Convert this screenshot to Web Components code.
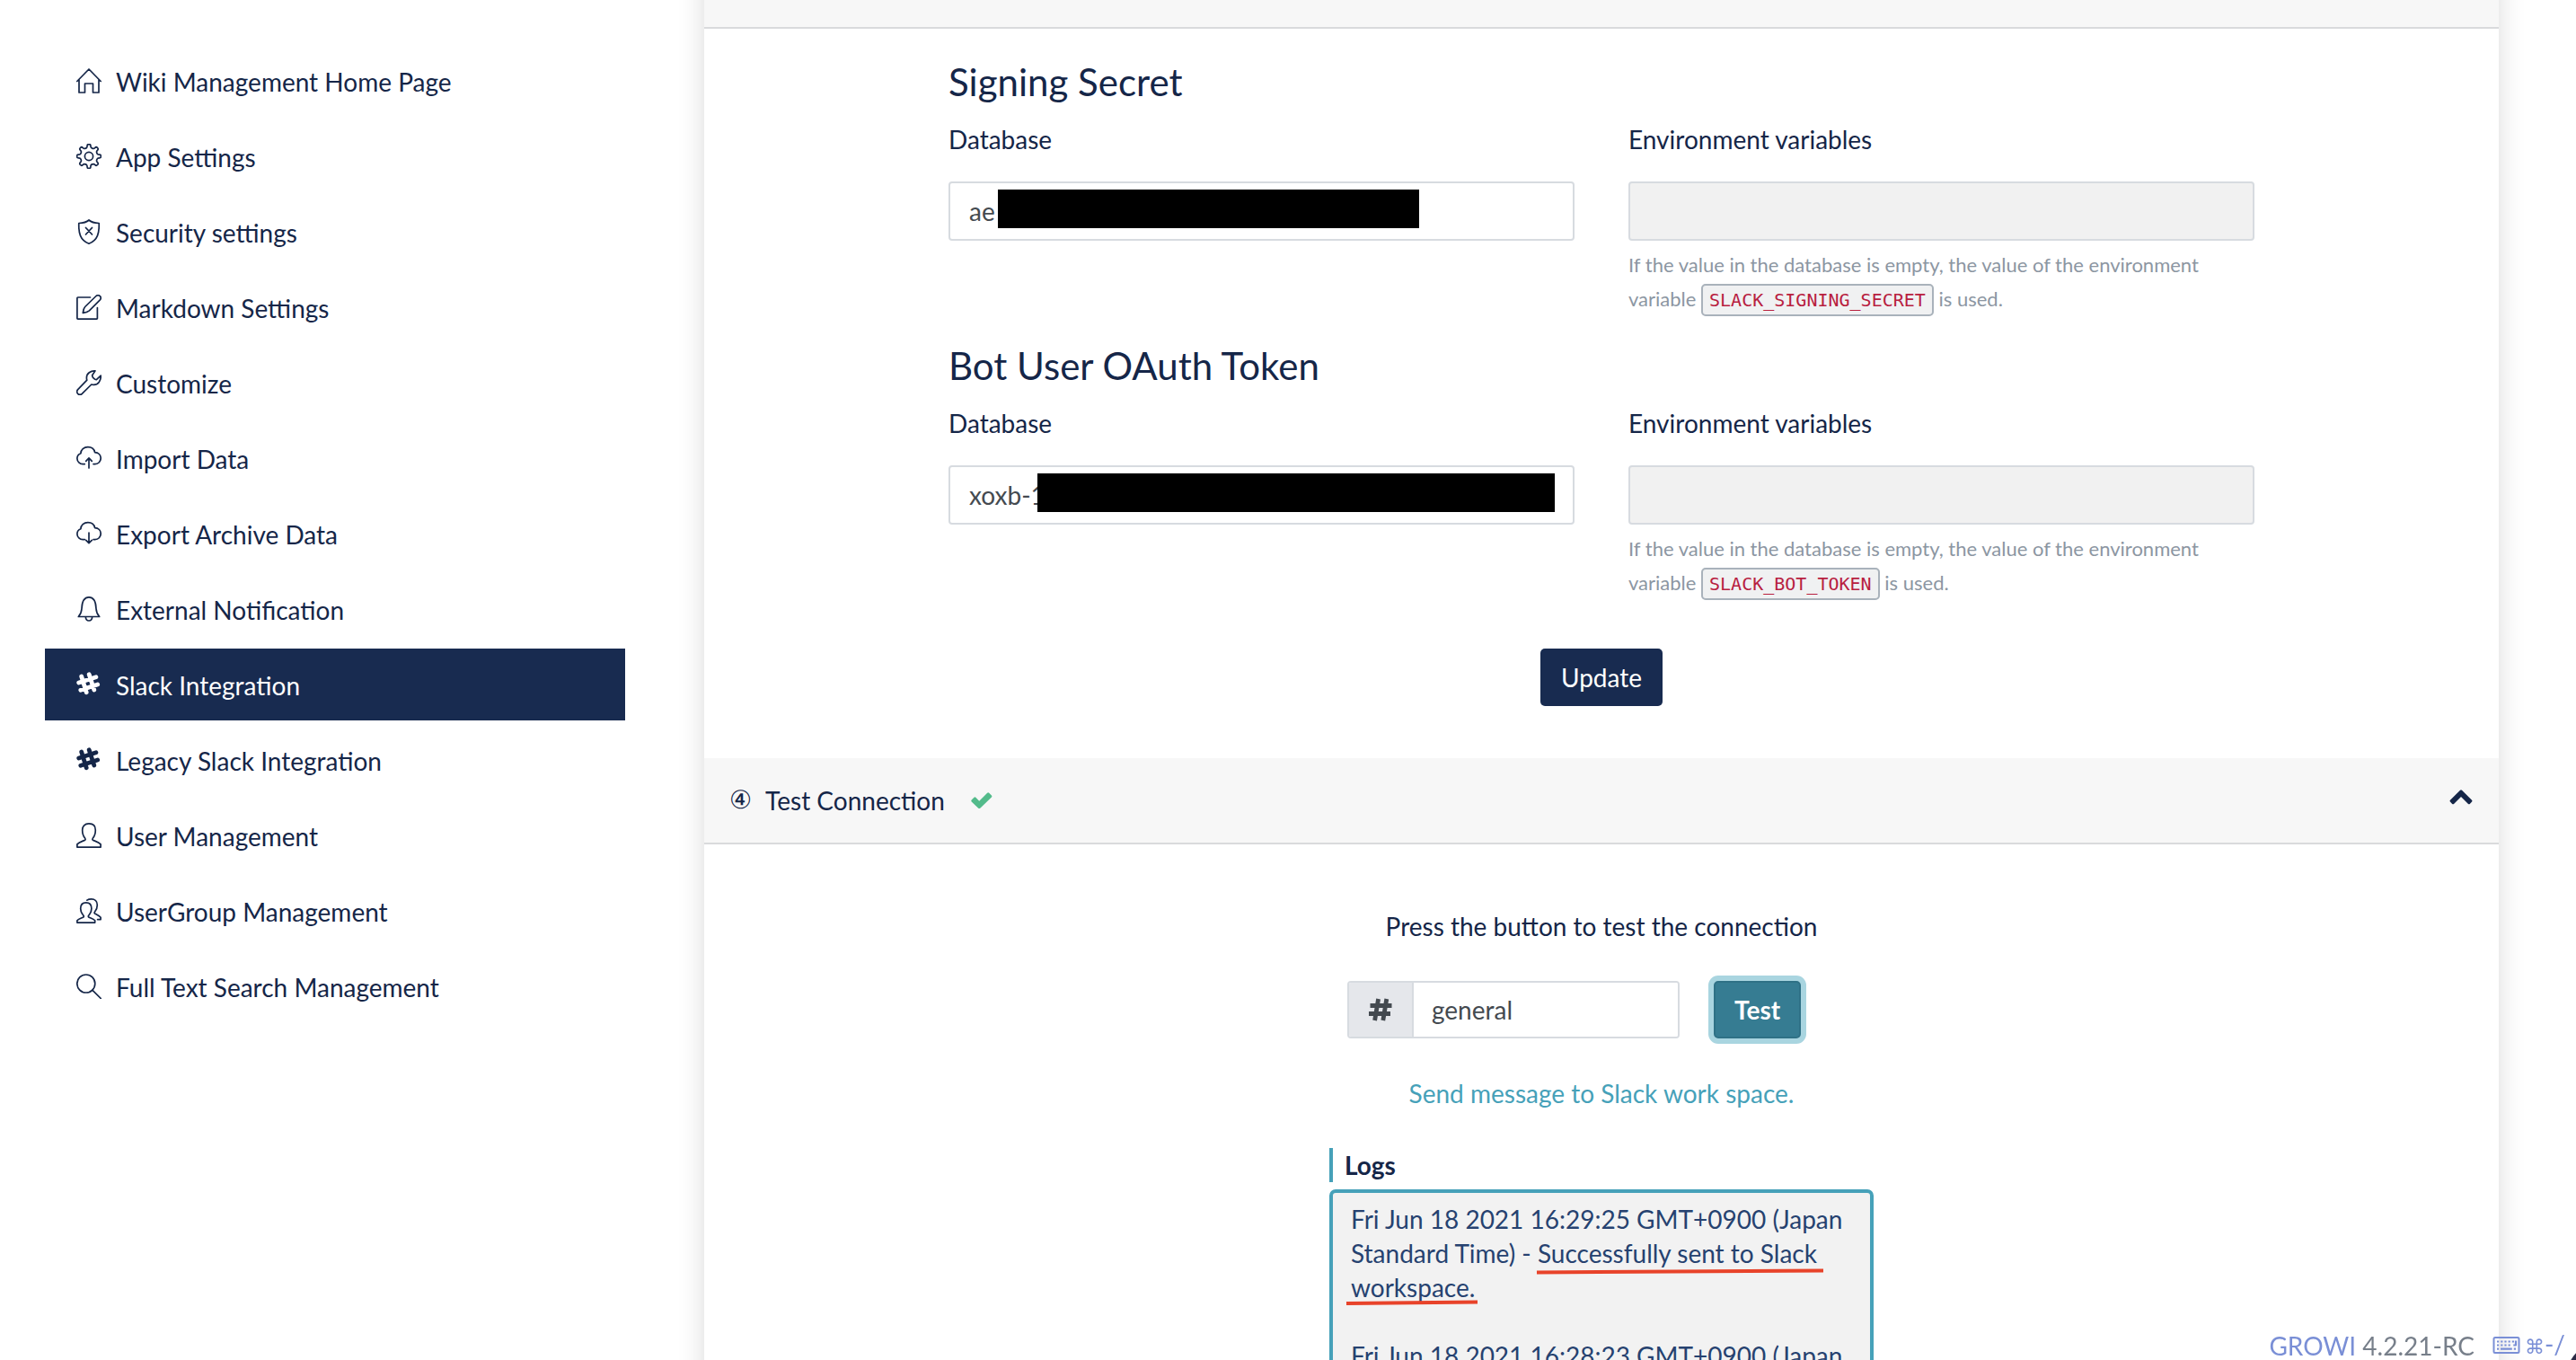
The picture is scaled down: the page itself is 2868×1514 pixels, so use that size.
<!DOCTYPE html>
<html lang="en">
<head>
<meta charset="utf-8">
<title>Slack Integration - GROWI</title>
<style>
  html, body { margin: 0; height: 100%; overflow: hidden; }
  body {
    --primary: #182b50;
    --info: #46a1b9;
    --line: #d9dadc;
    --field-line: #d7dbe0;
    --field-text: #444a50;
    font-family: Lato, "Liberation Sans", sans-serif;
    font-size: 28px;
    line-height: 38px;
    color: #152648;
    background: #fff;
  }
</style>
</head>
<body>
<growi-admin>
  <growi-nav slot="nav">
    <growi-nav-item icon="home">Wiki Management Home Page</growi-nav-item>
    <growi-nav-item icon="settings">App Settings</growi-nav-item>
    <growi-nav-item icon="shield">Security settings</growi-nav-item>
    <growi-nav-item icon="note">Markdown Settings</growi-nav-item>
    <growi-nav-item icon="wrench">Customize</growi-nav-item>
    <growi-nav-item icon="cloud-up">Import Data</growi-nav-item>
    <growi-nav-item icon="cloud-down">Export Archive Data</growi-nav-item>
    <growi-nav-item icon="bell">External Notification</growi-nav-item>
    <growi-nav-item icon="slack" active>Slack Integration</growi-nav-item>
    <growi-nav-item icon="slack">Legacy Slack Integration</growi-nav-item>
    <growi-nav-item icon="user">User Management</growi-nav-item>
    <growi-nav-item icon="users">UserGroup Management</growi-nav-item>
    <growi-nav-item icon="search">Full Text Search Management</growi-nav-item>
  </growi-nav>

  <growi-panel-header></growi-panel-header>
  <growi-secret-form>
    <growi-secret-row heading="Signing Secret" value="ae" env="SLACK_SIGNING_SECRET" style="--mask-left:55px;--mask-width:469px"></growi-secret-row>
    <growi-secret-row heading="Bot User OAuth Token" value="xoxb-1" env="SLACK_BOT_TOKEN" style="--mask-left:99px;--mask-width:576px"></growi-secret-row>
  </growi-secret-form>
  <growi-panel-header number="④" done>Test Connection</growi-panel-header>
  <growi-connection-test></growi-connection-test>
</growi-admin>
<growi-footer></growi-footer>

<script>
  // Outline of the eight-toothed gear, as one closed smooth path.
  const gear = (() => {
    const pts = [];
    for (let i = 0; i < 8; i++) {
      for (const [off, r] of [[-19, 9.6], [-11, 10.2], [-8, 13.6], [8, 13.6], [11, 10.2], [19, 9.6]]) {
        const a = (i * 45 + off - 90) * Math.PI / 180;
        pts.push([14 + r * Math.cos(a), 14 + r * Math.sin(a)]);
      }
    }
    const mid = (p, q) => [(p[0] + q[0]) / 2, (p[1] + q[1]) / 2];
    const f = p => p.map(n => n.toFixed(2)).join(' ');
    let d = 'M' + f(mid(pts[pts.length - 1], pts[0]));
    pts.forEach((p, i) => { d += 'Q' + f(p) + ' ' + f(mid(p, pts[(i + 1) % pts.length])); });
    return d + 'Z';
  })();

  const cloud = '<path d="M9.300 20.600H7.400A6.300 6.300 0 0 1 .9 14.400c0-3 1.700-4.800 4-5.600C4.900 4.500 8.500 1.600 12.900 1.600c4 0 7 2.300 7.700 6 4 .1 6.600 2.900 6.600 6.500 0 3.700-2.800 6.500-6.300 6.500h-1.900"/>';

  const icons = {
    home: '<path d="M3 12.500V27h6.500V17h9v10H25V12.500M.8 14.500 14 1l13.200 13.500"/>',
    settings: `<path d="${gear}"/><circle cx="14" cy="14" r="4.600"/>`,
    shield: '<path d="M14 1c-2.500 2.300-6 3.300-11.200 3.500C2.400 15 4 23.500 14 27.200 24 23.500 25.600 15 25.200 4.500 20 4.300 16.500 3.300 14 1ZM10.500 9.500l7 7.500M17.500 9.500l-7 7.500"/>',
    note: '<path d="M15.500 3H1.700a.8.8 0 0 0-.8.8V26.300a.8.8 0 0 0 .8.800H22.600a.8.8 0 0 0 .8-.8V14.500"/><path d="M7.300 20.300c.3-2.800 1-5.300 2.400-6.800L21.500 2c1.600-1.500 3.700-1.400 4.800-.3s1.200 3-.2 4.500L14.400 17.800c-1.600 1.300-4.200 2.200-7.100 2.500Z"/>',
    wrench: '<path d="M21 .9c-5-.4-9.600 2.800-9.600 7.600 0 1 .1 1.900.4 2.700L1.700 21.600c-1.200 1.300-1.200 3.400 0 4.700 1.300 1.200 3.300 1.200 4.600 0L16.800 16c.8.3 1.600.4 2.500.4 5 0 8.200-4.500 7.900-10.200l-4.800 4.500c-1.800.3-4.900-2.600-4.700-4.900Z"/>',
    'cloud-up': cloud + '<path d="M14 25V14M10.700 17.300 14 13.900l3.300 3.400"/>',
    'cloud-down': cloud + '<path d="M14 13v11.500M10.700 21.300 14 24.700l3.300-3.400"/>',
    bell: '<path d="M2.300 22.500C5 19.500 5.800 17.500 6 13.500 6.300 6 8 .9 14 .9S21.700 6 22 13.500c.2 4 1 6 3.700 9ZM10.300 22.800c.2 2.800 1.600 4.200 3.700 4.200s3.500-1.400 3.700-4.200"/>',
    slack: '<g stroke-width="4.800"><path d="M5.700 5 11.200 22.800M14.200 2.700 19.800 20M2.700 12 21.900 5.800M4.800 20.200 23.700 14"/></g>',
    user: '<path d="M.9 27.100v-3.300c2.400-2.400 6-3.300 8.700-4.500.7-.6.600-1.500 0-2.300C7.500 14.600 6.700 11.500 6.700 8 6.700 3.500 9.500.9 14 .9S21.300 3.500 21.300 8c0 3.500-.8 6.600-2.900 9-.6.800-.7 1.700 0 2.300 2.700 1.200 6.300 2.100 8.700 4.500v3.300Z"/>',
    users: '<path d="M.9 27.100v-2.300c1.800-2 4.700-2.600 6.900-3.800.6-.5.500-1.300 0-2C6.100 17 4.700 14.500 4.700 11.500c0-4 2.300-6.600 6.100-6.600s6.100 2.600 6.100 6.600c0 3-1.400 5.500-3.100 7.500-.5.700-.6 1.500 0 2 2.200 1.200 5.100 1.800 6.900 3.800v2.300Z"/><path d="M11.900 2.200C13.200 1.200 14.700.9 16.800.9c3.800 0 6.500 2.600 6.500 6.600 0 3-1 5.500-2.700 7.500-.5.700-.6 1.500 0 2 2.200 1.200 4.800 2.400 6.500 4.300v2.300h-3.500"/>',
    search: '<circle cx="10.800" cy="11" r="10"/><path d="M18 18.300 27.300 27.500"/>',
    hash: '<g stroke-width="4.800" stroke-linecap="butt"><path d="M11.600 2 7.600 26M20.800 2l-4 24M2.500 9.500h24M1 18.500h24"/></g>',
    check: '<path fill="currentColor" stroke="none" d="m1.800 13.500 3-3a1.500 1.500 0 0 1 2.100 0l4.100 4.200 9.700-9.700a1.500 1.500 0 0 1 2.100 0l3 3a1.500 1.500 0 0 1 0 2.100L12.100 23.300a1.500 1.500 0 0 1-2.100 0L1.800 15.600a1.500 1.500 0 0 1 0-2.100Z"/>',
    up: '<path fill="currentColor" stroke="none" d="M13 2.700 1.900 13.700a1.300 1.300 0 0 0 0 1.800l2.300 2.400a1.300 1.300 0 0 0 1.800 0L14 10l8 7.900a1.300 1.300 0 0 0 1.800 0l2.300-2.400a1.300 1.300 0 0 0 0-1.800L15 2.700a1.400 1.400 0 0 0-2 0Z"/>',
    keyboard: '<rect x="1" y="5" width="28" height="17" rx="1.500" stroke-width="2"/><path stroke-linecap="butt" stroke-width="2.200" stroke-dasharray="2.200 2" d="M4.500 9.500h19M4.500 13.500h16.800"/><path stroke-linecap="butt" stroke-width="2.200" d="M4.500 17.700h2.200M8.500 17.700h12.800M23.300 17.700h2.200M22.800 13.500h2.700V8.400"/>'
  };

  const define = (name, template) => customElements.define(name, class extends HTMLElement {
    connectedCallback() {
      if (this.shadowRoot) return;
      this.attachShadow({ mode: 'open' }).innerHTML = typeof template === 'function' ? template(this) : template;
    }
  });

  define('growi-icon', el => `
    <style>
      :host { display: block; flex: none; width: 28px; height: 28px; }
      svg { display: block; width: 100%; height: 100%; fill: none; stroke: currentColor; stroke-width: 1.700; stroke-linejoin: round; stroke-linecap: round; }
    </style>
    <svg viewBox="0 0 ${el.getAttribute('name') === 'keyboard' ? 30 : 28} 28" aria-hidden="true">${icons[el.getAttribute('name')]}</svg>`);

  define('growi-admin', `
    <style>
      :host { display: grid; grid-template-columns: minmax(0, 646fr) minmax(0, 1998fr); column-gap: 88px; align-items: start; padding: 0 86px 0 50px; }
      main { margin-top: -64px; background: #fff; box-shadow: 0 14px 28px rgba(0, 0, 0, .15); }
    </style>
    <slot name="nav"></slot>
    <main><slot></slot></main>`);

  define('growi-nav', `
    <style>
      :host { display: block; padding-top: 50px; }
      nav { display: flex; flex-direction: column; gap: 4px; }
    </style>
    <nav aria-label="Admin"><slot></slot></nav>`);

  define('growi-nav-item', el => `
    <style>
      :host { display: block; }
      a { display: flex; align-items: center; gap: 16px; height: 80px; padding: 0 35px; color: inherit; text-decoration: none; }
      span { padding-top: 2px; }
      :host([active]) a { background: var(--primary); color: #fff; }
    </style>
    <a href="#"${el.hasAttribute('active') ? ' aria-current="page"' : ''}><growi-icon name="${el.getAttribute('icon')}"></growi-icon><span><slot></slot></span></a>`);

  define('growi-panel-header', el => `
    <style>
      :host { display: block; background: #f7f7f7; border-bottom: 2px solid var(--line); }
      button { display: flex; align-items: center; width: 100%; height: 94px; padding: 0 28px; border: 0; background: none; font: inherit; color: inherit; text-align: left; }
      .number { font-family: "DejaVu Sans", sans-serif; margin-right: 15px; }
      .done { width: 26px; height: 26px; margin-left: 28px; color: #53bb8b; }
      .toggle { margin-left: auto; }
    </style>
    <button type="button" aria-label="${el.textContent || 'Panel'}">${el.hasAttribute('number') ? `
      <span class="number">${el.getAttribute('number')}</span><span><slot></slot></span>
      <growi-icon class="done" name="check"></growi-icon>
      <growi-icon class="toggle" name="up"></growi-icon>` : ''}
    </button>`);

  define('growi-secret-form', `
    <style>
      :host { display: block; padding: 34px 272px 58px; }
      form { display: flex; flex-direction: column; }
      .rows { display: flex; flex-direction: column; gap: 30px; }
      button { align-self: center; height: 64px; margin-top: 54px; padding: 0 23px; border: 0; border-radius: 5px; background: var(--primary); color: #fff; font: inherit; }
    </style>
    <form>
      <div class="rows"><slot></slot></div>
      <button type="button">Update</button>
    </form>`);

  define('growi-secret-row', el => `
    <style>
      :host { display: block; }
      h3 { margin: 0 0 20px; font-size: 42px; line-height: 50px; font-weight: 400; }
      .cols { display: grid; grid-template-columns: 1fr 1fr; column-gap: 60px; align-items: start; }
      label { display: block; margin-bottom: 28px; }
      .field { position: relative; }
      input { display: block; box-sizing: border-box; width: 100%; height: 66px; padding: 0 21px; border: 2px solid var(--field-line); border-radius: 4px; background: #fff; color: var(--field-text); font: inherit; }
      input[readonly] { background: #f1f1f1; }
      .mask { position: absolute; top: 9px; left: var(--mask-left); width: var(--mask-width); height: 43px; background: #000; }
      p { margin: 8px 0 0; font-size: 22px; color: #8c96a2; }
      code { padding: 4px 7px; border: 2px solid #a9b2bb; border-radius: 5px; background: #f0f1f2; color: #b8203f; font-family: "DejaVu Sans Mono", monospace; font-size: 20px; line-height: 20px; }
    </style>
    <h3>${el.getAttribute('heading')}</h3>
    <div class="cols">
      <div>
        <label for="db">Database</label>
        <div class="field"><input id="db" type="text" value="${el.getAttribute('value')}"><span class="mask"></span></div>
      </div>
      <div>
        <label for="env">Environment variables</label>
        <input id="env" type="text" readonly>
        <p>If the value in the database is empty, the value of the environment variable <code>${el.getAttribute('env')}</code> is used.</p>
      </div>
    </div>`);

  define('growi-connection-test', `
    <style>
      :host { display: flex; flex-direction: column; align-items: center; gap: 42px; padding: 72px 30px; }
      p { margin: 0; }
      form { display: flex; gap: 38px; box-sizing: border-box; width: 606px; padding-left: 20px; }
      .group { display: flex; width: 370px; height: 64px; box-sizing: border-box; border: 2px solid var(--field-line); border-radius: 4px; overflow: hidden; }
      label { display: flex; align-items: center; justify-content: center; flex: none; width: 70px; border-right: 2px solid var(--field-line); background: #e5e7eb; color: var(--field-text); }
      input { flex: 1; min-width: 0; padding: 0 20px; border: 0; background: #fff; color: var(--field-text); font: inherit; }
      button { height: 64px; padding: 0 21px; border: 2px solid #2f7186; border-radius: 5px; background: #367c92; color: #fff; font: inherit; font-weight: 700; box-shadow: 0 0 0 6px #a9d5e0; }
      .result { color: var(--info); }
      .logs { display: flex; flex-direction: column; gap: 8px; width: 606px; }
      .logs label { display: block; width: auto; padding-left: 13px; border: 0; border-left: 4px solid var(--info); background: none; color: inherit; font-weight: 700; }
      .sheet { position: relative; }
      textarea { display: block; box-sizing: border-box; width: 100%; height: 320px; padding: 10px 20px; border: 4px solid var(--info); border-radius: 7px; background: #f2f2f2; color: #264270; font: inherit; resize: none; overflow: hidden; }
      .marks { position: absolute; top: 0; left: 0; width: 606px; height: 190px; fill: none; stroke: #e8432a; stroke-width: 4; pointer-events: none; }
    </style>
    <p>Press the button to test the connection</p>
    <form>
      <div class="group">
        <label for="channel" aria-label="Channel"><growi-icon name="hash"></growi-icon></label>
        <input id="channel" type="text" value="general">
      </div>
      <button type="button">Test</button>
    </form>
    <p class="result">Send message to Slack work space.</p>
    <div class="logs">
      <label for="log">Logs</label>
      <div class="sheet">
        <textarea id="log" readonly>Fri Jun 18 2021 16:29:25 GMT+0900 (Japan Standard Time) - Successfully sent to Slack workspace.

Fri Jun 18 2021 16:28:23 GMT+0900 (Japan</textarea>
        <svg class="marks" viewBox="0 0 606 190" aria-hidden="true"><path d="M231 92.500 550 90.500M19 127 165 125.500"/></svg>
      </div>
    </div>`);

  define('growi-footer', `
    <style>
      :host { position: fixed; right: 12px; bottom: -5px; display: flex; align-items: center; gap: 20px; color: #777f8a; }
      a { color: #7a8fd6; text-decoration: none; }
      .keys { display: flex; align-items: center; gap: 5px; }
      growi-icon { width: 31px; }
      .cmd { font-family: "DejaVu Sans", sans-serif; font-size: 22px; }
      .help { position: fixed; right: 0; bottom: 0; width: 8px; height: 10px; fill: #2b2a45; }
    </style>
    <span><a href="#">GROWI</a> 4.2.21-RC</span>
    <a class="keys" href="#"><growi-icon name="keyboard"></growi-icon><span><span class="cmd">⌘</span>-/</span></a>
    <svg class="help" viewBox="0 0 8 10" aria-hidden="true"><circle cx="45" cy="36" r="50"/></svg>`);
</script>
</body>
</html>
